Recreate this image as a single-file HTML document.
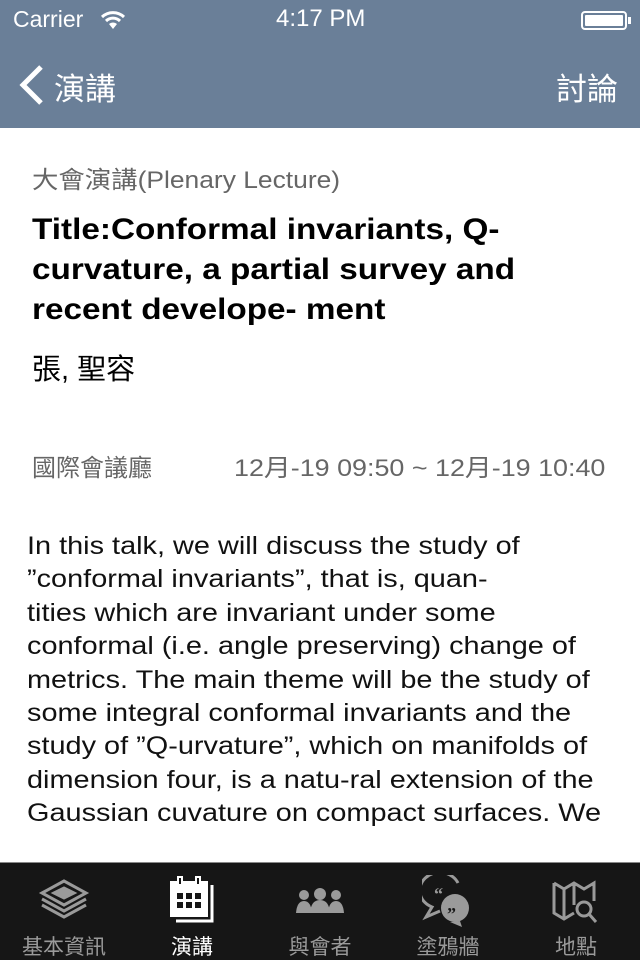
<!DOCTYPE html>
<html><head><meta charset="utf-8"><style>
*{margin:0;padding:0;box-sizing:border-box}
body{width:640px;height:960px;overflow:hidden;background:#fff;font-family:"Liberation Sans","Noto Sans CJK TC",sans-serif;position:relative}
.nav{position:absolute;top:0;left:0;width:640px;height:128px;background:#6a7f98;color:#fff}
.abs{position:absolute;white-space:nowrap;transform-origin:left top}
.tab{position:absolute;top:862px;left:0;width:640px;height:98px;background:#161616;border-top:1px solid #888}
.t{position:absolute;top:68px;width:128px;text-align:center;font-size:21px;color:#9a9a9a}
</style></head><body>
<div class="nav">
<div class="abs" style="left:13px;top:6px;font-size:23px">Carrier</div>
<svg class="abs" style="left:100px;top:10px" width="26" height="20" viewBox="0 0 26 20"><path d="M2 7 A16 16 0 0 1 24 7" stroke="#fff" stroke-width="3" fill="none"/><path d="M6 11 A10 10 0 0 1 20 11" stroke="#fff" stroke-width="3" fill="none"/><path d="M13 19 L9 14 A6 6 0 0 1 17 14 Z" fill="#fff"/></svg>
<div class="abs" style="left:276px;top:5px;font-size:24px">4:17 PM</div>
<div class="abs" style="left:581px;top:11px;width:46px;height:19px;border:2px solid #fff;border-radius:4px;padding:2px"><div style="background:#fff;width:100%;height:100%;border-radius:1px"></div></div>
<div class="abs" style="left:628px;top:17px;width:3px;height:7px;background:#fff"></div>
<svg class="abs" style="left:16px;top:64px" width="30" height="42" viewBox="0 0 30 42"><path d="M25 3 L7 21 L25 39" stroke="#fff" stroke-width="5" fill="none"/></svg>
<div class="abs" style="left:54px;top:64px;font-size:31px">演講</div>
<div class="abs" style="left:556px;top:64px;font-size:31px">討論</div>
</div>
<div class="abs" style="left:32px;top:160px;font-size:24px;color:#666;transform:scaleX(1.1)">大會演講(Plenary Lecture)</div>
<div class="abs" style="left:32px;top:210px;font-size:30px;font-weight:bold;line-height:40px;color:#000;transform:scaleX(1.11)">Title:Conformal invariants, Q-<br>curvature, a partial survey and<br>recent develope- ment</div>
<div class="abs" style="left:32px;top:346px;font-size:29px;color:#000">張, 聖容</div>
<div class="abs" style="left:32px;top:448px;font-size:24px;color:#666">國際會議廳</div>
<div class="abs" style="left:234px;top:448px;font-size:24px;color:#666;transform:scaleX(1.12)">12月-19 09:50 ~ 12月-19 10:40</div>
<div class="abs" style="left:27px;top:530px;font-size:25px;line-height:33.4px;color:#111;transform:scaleX(1.155)">In this talk, we will discuss the study of<br>”conformal invariants”, that is, quan-<br>tities which are invariant under some<br>conformal (i.e. angle preserving) change of<br>metrics. The main theme will be the study of<br>some integral conformal invariants and the<br>study of ”Q-urvature”, which on manifolds of<br>dimension four, is a natu-ral extension of the<br>Gaussian cuvature on compact surfaces. We</div>
<div class="tab">
<svg class="abs" style="left:38px;top:14px" width="52" height="46" viewBox="0 0 52 46" fill="none" stroke="#9a9a9a" stroke-width="3"><path d="M4 28 L26 40 L48 28"/><path d="M4 22 L26 34 L48 22"/><path d="M4 16 L26 4 L48 16 L26 28 Z"/><path d="M16 16 L26 11 L36 16 L26 21 Z" fill="#9a9a9a"/></svg>
<svg class="abs" style="left:167px;top:12px" width="50" height="50" viewBox="0 0 50 50"><rect x="3" y="6" width="38" height="36" fill="#fff"/><path d="M45 10 V46 H9" stroke="#fff" stroke-width="3" fill="none"/><rect x="11" y="2" width="4" height="8" fill="#161616" stroke="#fff" stroke-width="2"/><rect x="29" y="2" width="4" height="8" fill="#161616" stroke="#fff" stroke-width="2"/><g fill="#161616"><rect x="10" y="18" width="6" height="6"/><rect x="19" y="18" width="6" height="6"/><rect x="28" y="18" width="6" height="6"/><rect x="10" y="27" width="6" height="6"/><rect x="19" y="27" width="6" height="6"/><rect x="28" y="27" width="6" height="6"/></g></svg>
<svg class="abs" style="left:295px;top:24px" width="50" height="28" viewBox="0 0 50 28" fill="#9a9a9a"><circle cx="9" cy="8" r="5"/><path d="M1 26 Q2 14 9 14 Q16 14 17 26Z"/><circle cx="25" cy="7" r="6"/><path d="M15 26 Q16 13 25 13 Q34 13 35 26Z"/><circle cx="41" cy="8" r="5"/><path d="M33 26 Q34 14 41 14 Q48 14 49 26Z"/></svg>
<svg class="abs" style="left:422px;top:12px" width="52" height="52" viewBox="0 0 52 52"><path d="M36 8 A20 18 0 1 0 10 32 L4 42 L18 36" stroke="#9a9a9a" stroke-width="3" fill="none"/><circle cx="33" cy="33" r="14" fill="#9a9a9a"/><path d="M28 47 L38 46 L40 52Z" fill="#9a9a9a"/><text x="12" y="25" font-size="18" font-weight="bold" fill="#9a9a9a" font-family="Liberation Serif">“</text><text x="25" y="45" font-size="18" font-weight="bold" fill="#161616" font-family="Liberation Serif">”</text></svg>
<svg class="abs" style="left:551px;top:16px" width="48" height="46" viewBox="0 0 48 46" fill="none" stroke="#9a9a9a" stroke-width="3"><path d="M3 4 L13 10 L23 4 L33 10 L43 4 V22 M3 4 V34 L13 40 L23 34 M13 10 V40 M23 4 V26"/><circle cx="33" cy="30" r="7"/><path d="M38 35 L45 43"/></svg>
<div class="t" style="left:0">基本資訊</div>
<div class="t" style="left:128px;color:#fff">演講</div>
<div class="t" style="left:256px">與會者</div>
<div class="t" style="left:384px">塗鴉牆</div>
<div class="t" style="left:512px">地點</div>
</div>
</body></html>
